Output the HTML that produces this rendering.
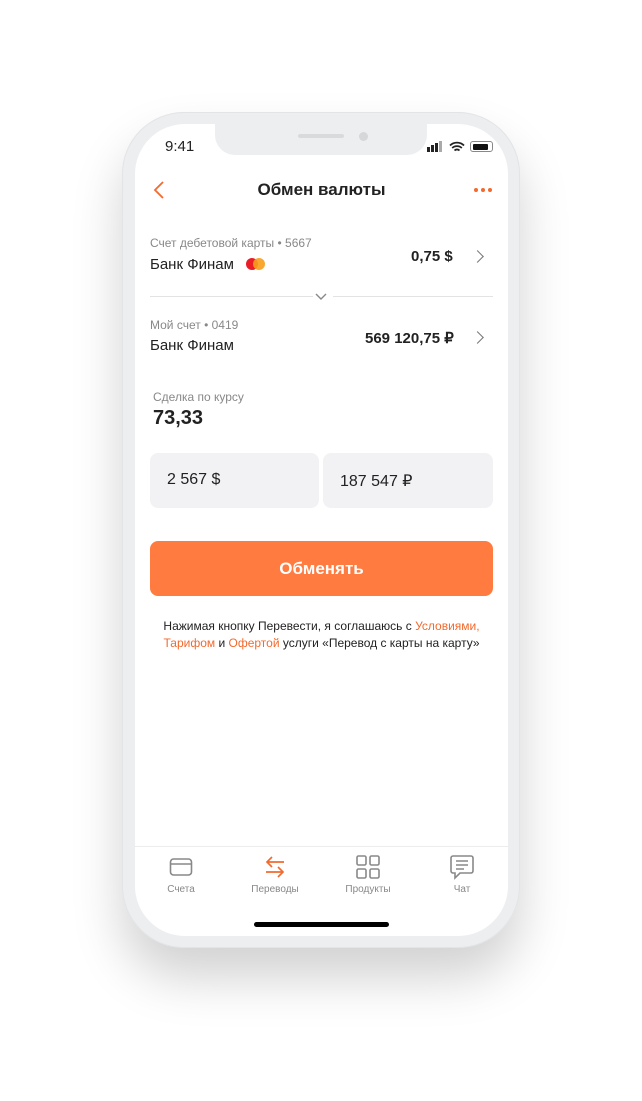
<!DOCTYPE html>
<html><head><meta charset="utf-8"><style>
*{margin:0;padding:0;box-sizing:border-box}
body{width:642px;height:1101px;background:#fff;position:relative;overflow:hidden;font-family:"Liberation Sans",sans-serif;color:#222}
.frame{position:absolute;left:122px;top:112px;width:398px;height:836px;border-radius:62px;background:#eceef0;box-shadow:0 30px 50px rgba(0,0,0,.18),inset 0 0 0 1px #e2e4e6}
.screen{position:absolute;left:135px;top:124px;width:373px;height:812px;border-radius:50px;background:#fff;overflow:hidden}
.notch{position:absolute;left:80px;top:0;width:212px;height:31px;background:#eceef0;border-radius:0 0 20px 20px}
.abs{position:absolute}
.o{color:#f26a2e}
.g{color:#888}
.sep{position:absolute;height:1px;background:#e3e3e3}
.chev{position:absolute;width:9px;height:9px;border-right:1.6px solid #777;border-top:1.6px solid #777;transform:rotate(45deg)}
.box{position:absolute;top:329px;height:55px;background:#f2f2f4;border-radius:8px;font-size:16px;padding:18px 0 0 17px}
.tab{position:absolute;top:760px;font-size:10px;color:#888;text-align:center;width:60px}
.dot{position:absolute;top:64px;width:4px;height:4px;border-radius:50%;background:#f26a2e}
</style></head><body>
<div class="frame"></div>
<div class="screen">
 <div class="notch"><div class="abs" style="left:83px;top:10px;width:46px;height:4px;border-radius:2px;background:#d9dadc"></div><div class="abs" style="left:144px;top:8px;width:9px;height:9px;border-radius:50%;background:#d6d7d9"></div></div>
 <div class="abs" style="left:30px;top:14px;font-size:15px">9:41</div>
 <div class="abs" style="left:292px;top:23px;width:3px;height:5px;background:#222"></div>
 <div class="abs" style="left:296px;top:21px;width:3px;height:7px;background:#222"></div>
 <div class="abs" style="left:300px;top:19px;width:3px;height:9px;background:#222"></div>
 <div class="abs" style="left:304px;top:17px;width:3px;height:11px;background:#aaa"></div>
 <svg class="abs" style="left:314px;top:17px" width="16" height="12" viewBox="0 0 16 12"><path d="M1 4.5a10 10 0 0 1 14 0M3.2 7a7 7 0 0 1 9.6 0M5.5 9.5a3.5 3.5 0 0 1 5 0" stroke="#222" stroke-width="1.8" fill="none"/></svg>
 <div class="abs" style="left:335px;top:17px;width:23px;height:11px;border:1px solid #888;border-radius:3px;padding:1.5px"><div style="width:15px;height:6px;background:#111;border-radius:1px"></div></div>
 <svg class="abs" style="left:18px;top:57px" width="12" height="18"><path d="M10 1L2 9l8 8" stroke="#f26a2e" stroke-width="1.8" fill="none"/></svg>
 <div class="abs" style="left:0;width:373px;top:56px;text-align:center;font-size:17px;font-weight:bold">Обмен валюты</div>
 <div class="dot" style="left:339px"></div><div class="dot" style="left:346px"></div><div class="dot" style="left:353px"></div>
 <div class="abs g" style="left:15px;top:112px;font-size:12px">Счет дебетовой карты • 5667</div>
 <div class="abs" style="left:15px;top:132px;font-size:15px">Банк Финам</div>
 <div class="abs" style="left:111px;top:134px;width:12px;height:12px;border-radius:50%;background:#eb1c26"></div>
 <div class="abs" style="left:118px;top:134px;width:12px;height:12px;border-radius:50%;background:#f79e1b;opacity:.9"></div>
 <div class="abs" style="left:276px;top:124px;font-size:15px;font-weight:bold">0,75 $</div>
 <div class="chev" style="left:338px;top:128px"></div>
 <div class="sep" style="left:15px;top:172px;width:163px"></div>
 <div class="sep" style="left:198px;top:172px;width:160px"></div>
 <svg class="abs" style="left:180px;top:169px" width="12" height="7"><path d="M1 1l5 5 5-5" stroke="#888" stroke-width="1.4" fill="none"/></svg>
 <div class="abs g" style="left:15px;top:194px;font-size:12px">Мой счет • 0419</div>
 <div class="abs" style="left:15px;top:213px;font-size:15px">Банк Финам</div>
 <div class="abs" style="left:230px;top:205px;font-size:15px;font-weight:bold">569 120,75 ₽</div>
 <div class="chev" style="left:338px;top:209px"></div>
 <div class="abs g" style="left:18px;top:266px;font-size:12px">Сделка по курсу</div>
 <div class="abs" style="left:18px;top:283px;font-size:20px;font-weight:bold">73,33</div>
 <div class="box" style="left:15px;width:169px">2 567 $</div>
 <div class="box" style="left:188px;width:170px">187 547 ₽</div>
 <div class="abs" style="left:15px;top:417px;width:343px;height:55px;background:#ff7b40;border-radius:8px;color:#fff;font-size:17px;font-weight:bold;text-align:center;line-height:55px">Обменять</div>
 <div class="abs" style="left:0;width:373px;top:494px;text-align:center;font-size:12px;line-height:17px">Нажимая кнопку Перевести, я соглашаюсь с <span class="o">Условиями,</span><br><span class="o">Тарифом</span> и <span class="o">Офертой</span> услуги «Перевод с карты на карту»</div>
 <div class="sep" style="left:0;top:722px;width:373px;background:#ececec"></div>
 <svg class="abs" style="left:34px;top:733px" width="24" height="20"><rect x="1.5" y="2" width="21" height="16" rx="3" stroke="#888" stroke-width="1.6" fill="none"/><path d="M1.5 7h21" stroke="#888" stroke-width="1.6"/></svg>
 <svg class="abs" style="left:129px;top:732px" width="22" height="22"><path d="M20 6H3M8 1L3 6l5 5M2 16h17M14 11l5 5-5 5" stroke="#f26a2e" stroke-width="1.7" fill="none"/></svg>
 <svg class="abs" style="left:221px;top:731px" width="24" height="24"><g stroke="#888" stroke-width="1.6" fill="none"><rect x="1" y="1" width="9" height="9" rx="1.5"/><rect x="14" y="1" width="9" height="9" rx="1.5"/><rect x="1" y="14" width="9" height="9" rx="1.5"/><rect x="14" y="14" width="9" height="9" rx="1.5"/></g></svg>
 <svg class="abs" style="left:315px;top:731px" width="24" height="25"><path d="M3 1h18a2 2 0 0 1 2 2v13a2 2 0 0 1-2 2H10l-5 5v-5H3a2 2 0 0 1-2-2V3a2 2 0 0 1 2-2zM6 6h12M6 10h12M6 14h8" stroke="#888" stroke-width="1.6" fill="none"/></svg>
 <div class="tab" style="left:16px">Счета</div>
 <div class="tab o" style="left:110px">Переводы</div>
 <div class="tab" style="left:203px">Продукты</div>
 <div class="tab" style="left:297px">Чат</div>
 <div class="abs" style="left:119px;top:798px;width:135px;height:5px;border-radius:3px;background:#000"></div>
</div>
</body></html>
